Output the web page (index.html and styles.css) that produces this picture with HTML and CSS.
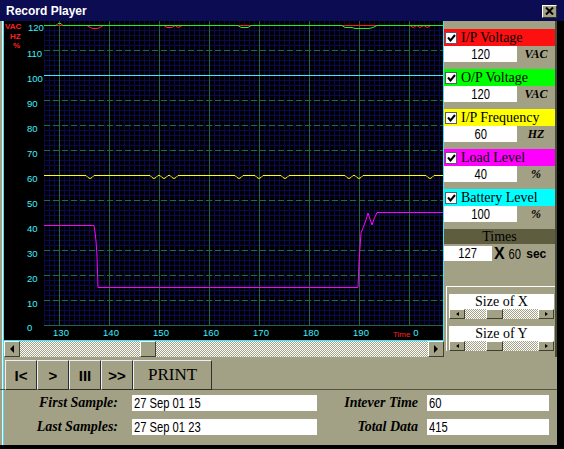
FILE: index.html
```html
<!DOCTYPE html>
<html lang="en">
  <head>
    <meta charset="UTF-8" />
    <title>Record Player</title>
    <link rel="stylesheet" href="styles.css">
  </head>
  <body>
    <div class="window">
      <div class="titlebar">
        <span class="title">Record Player</span>
        <button class="close">
          <svg width="9" height="8" viewBox="0 0 9 8"><path d="M1 0.5L8 7.5M8 0.5L1 7.5" stroke="#000" stroke-width="2"/></svg>
        </button>
      </div>

      <div class="frame">
        <div class="main">
          <div class="graph">
            <div class="chart">
              <svg width="439" height="319" viewBox="4 21 439 319">
                <defs>
                  <pattern id="fine" x="44" y="0" width="5" height="5" patternUnits="userSpaceOnUse">
                    <path d="M0 0.5H5M0.5 0V5" stroke="#09094e" stroke-width="1"/>
                  </pattern>
                </defs>
                <rect x="4" y="21" width="439" height="319" fill="#000"/>
                <rect x="44" y="21" width="399" height="304" fill="url(#fine)" shape-rendering="crispEdges"/>

                <g stroke="#1f6650" shape-rendering="crispEdges">
                  <path d="M59.5 21V325M109.5 21V325M159.5 21V325M209.5 21V325M259.5 21V325M309.5 21V325M359.5 21V325M409.5 21V325"/>
                  <path d="M44 325.5H443"/>
                </g>
                <g stroke="#18703f" stroke-dasharray="6 3" shape-rendering="crispEdges">
                  <path d="M44 50.5H443M44 100.5H443M44 125.5H443M44 150.5H443M44 200.5H443M44 250.5H443M44 275.5H443M44 300.5H443"/>
                </g>

                <g fill="#ff2020" font-family="Liberation Sans, Arial, sans-serif" font-size="8" font-weight="bold">
                  <text x="5" y="29">VAC</text>
                  <text x="10" y="39">HZ</text>
                  <text x="13" y="48">%</text>
                </g>

                <g fill="#3cf0ff" font-family="Liberation Sans, Arial, sans-serif" font-size="9.5">
                  <text x="28" y="31">120</text>
                  <text x="27" y="56.5">110</text>
                  <text x="27" y="81.5">100</text>
                  <text x="27" y="106.5">90</text>
                  <text x="27" y="131.5">80</text>
                  <text x="27" y="156.5">70</text>
                  <text x="27" y="181.5">60</text>
                  <text x="27" y="206.5">50</text>
                  <text x="27" y="231.5">40</text>
                  <text x="27" y="256.5">30</text>
                  <text x="27" y="281.5">20</text>
                  <text x="27" y="306.5">10</text>
                  <text x="27" y="331">0</text>
                </g>
                <g fill="#3cf0ff" font-family="Liberation Sans, Arial, sans-serif" font-size="9.5" text-anchor="middle">
                  <text x="61" y="336">130</text>
                  <text x="111" y="336">140</text>
                  <text x="161" y="336">150</text>
                  <text x="211" y="336">160</text>
                  <text x="261" y="336">170</text>
                  <text x="311" y="336">180</text>
                  <text x="361" y="336">190</text>
                  <text x="416" y="336">0</text>
                </g>
                <text x="393" y="337" fill="#ff2020" font-family="Liberation Sans, Arial, sans-serif" font-size="8">Time</text>

                <g fill="none" stroke-width="1">
                  <path stroke="#40e8ff" d="M44 75.5H443"/>
                  <path stroke="#ff2020" d="M44 25.5H87L90 27.5L93 28.5H97L100 27.5L103 25.5H164L167 27.5H172L175 25.5L178 27.5L182 25.5H410L413 27.5L417 25.5L420 27.5L424 25.5L427 27.5L431 25.5H443"/>
                  <path stroke="#22ee22" d="M44 25.5H56L58 23.5H61L63 25.5H238L241 27.5H248L251 25.5H342L345 27.5H352L355 28.5H369L373 27.5L377 25.5H443"/>
                  <path stroke="#ffff00" d="M44 175.5H86l2 2l2 1l2 -1l2 -2H150l2 2l2 1l2 -1l2 -2H160l2 2l2 1l2 -1l2 -2H170l2 2l2 1l2 -1l2 -2H235l2 2l2 1l2 -1l2 -2H255l2 2l2 1l2 -1l2 -2H281l2 2l2 1l2 -1l2 -2H345l2 2l2 1l2 -1l2 -2H355l2 2l2 1l2 -1l2 -2H426l2 2l2 1l2 -1l2 -2H443"/>
                  <path stroke="#ff00ff" d="M44 225.5H94L95 232L96 241L97 256L98 287.5H358L359 262L361 233L363 228L366 220L368 213L370 219L372 225L374 219L377 212.5H443"/>
                </g>
              </svg>
            </div>
            <div class="hscroll">
              <span class="arrow"><i class="tri-left"></i></span>
              <div class="track"><span class="thumb main-thumb"></span></div>
              <span class="arrow"><i class="tri-right"></i></span>
            </div>
          </div>

          <div class="side">
            <div class="series">
              <div class="series-head red"><span class="check"><svg width="9" height="8" viewBox="0 0 9 8"><path d="M1 3.5L3.5 6.5L8 1" stroke="#000" stroke-width="2" fill="none"/></svg></span>I/P Voltage</div>
              <div class="series-val"><span class="val-box"><span class="narrow">120</span></span><span class="unit">VAC</span></div>
            </div>
            <div class="series">
              <div class="series-head green"><span class="check"><svg width="9" height="8" viewBox="0 0 9 8"><path d="M1 3.5L3.5 6.5L8 1" stroke="#000" stroke-width="2" fill="none"/></svg></span>O/P Voltage</div>
              <div class="series-val"><span class="val-box"><span class="narrow">120</span></span><span class="unit">VAC</span></div>
            </div>
            <div class="series">
              <div class="series-head yellow"><span class="check"><svg width="9" height="8" viewBox="0 0 9 8"><path d="M1 3.5L3.5 6.5L8 1" stroke="#000" stroke-width="2" fill="none"/></svg></span>I/P Frequency</div>
              <div class="series-val"><span class="val-box"><span class="narrow">60</span></span><span class="unit">HZ</span></div>
            </div>
            <div class="series">
              <div class="series-head magenta"><span class="check"><svg width="9" height="8" viewBox="0 0 9 8"><path d="M1 3.5L3.5 6.5L8 1" stroke="#000" stroke-width="2" fill="none"/></svg></span>Load Level</div>
              <div class="series-val"><span class="val-box"><span class="narrow">40</span></span><span class="unit">%</span></div>
            </div>
            <div class="series">
              <div class="series-head cyan"><span class="check"><svg width="9" height="8" viewBox="0 0 9 8"><path d="M1 3.5L3.5 6.5L8 1" stroke="#000" stroke-width="2" fill="none"/></svg></span>Battery Level</div>
              <div class="series-val"><span class="val-box"><span class="narrow">100</span></span><span class="unit">%</span></div>
            </div>

            <div class="times">
              <div class="times-head">Times</div>
              <div class="times-val">
                <span class="times-box"><span class="narrow">127</span></span>
                <span class="times-x">X</span>
                <span class="times-num narrow">60</span>
                <span class="times-sec">sec</span>
              </div>
            </div>

            <div class="sizes">
              <div class="size-label">Size of X</div>
              <div class="mini-scroll">
                <span class="arrow small"><i class="tri-left"></i></span>
                <div class="track"><span class="thumb mini-thumb"></span></div>
                <span class="arrow small"><i class="tri-right"></i></span>
              </div>
              <div class="size-label">Size of Y</div>
              <div class="mini-scroll">
                <span class="arrow small"><i class="tri-left"></i></span>
                <div class="track"><span class="thumb mini-thumb"></span></div>
                <span class="arrow small"><i class="tri-right"></i></span>
              </div>
            </div>
          </div>
        </div>

        <div class="bottom">
          <div class="toolbar">
            <button class="tool">I&lt;</button>
            <button class="tool">&gt;</button>
            <button class="tool">III</button>
            <button class="tool">&gt;&gt;</button>
            <button class="tool print">PRINT</button>
          </div>
          <div class="info">
            <span class="label">First Sample:</span>
            <span class="field"><span class="narrow left">27 Sep 01 15</span></span>
            <span class="label">Intever Time</span>
            <span class="field"><span class="narrow left">60</span></span>
            <span class="label">Last Samples:</span>
            <span class="field"><span class="narrow left">27 Sep 01 23</span></span>
            <span class="label">Total Data</span>
            <span class="field"><span class="narrow left">415</span></span>
          </div>
        </div>
      </div>
    </div>
  </body>
</html>
```

FILE: styles.css
```css
body {
  margin: 0;
  background: #a3a185;
  font-family: "Liberation Sans", Arial, sans-serif;
}
.window {
  width: 564px;
  height: 449px;
  display: flex;
  flex-direction: column;
  background: #a3a185;
  overflow: hidden;
}
.titlebar {
  height: 21px;
  flex: none;
  background: #0c0c52;
  display: flex;
  align-items: center;
  justify-content: space-between;
  padding: 0 7px 0 6px;
}
.title {
  color: #fff;
  font-weight: bold;
  font-size: 12px;
}
.close {
  width: 15px;
  height: 13px;
  padding: 0;
  margin-top: 1px;
  background: #a3a185;
  border: 1px solid;
  border-color: #fff #303024 #303024 #fff;
  display: flex;
  align-items: center;
  justify-content: center;
}
.frame {
  flex: 1;
  display: flex;
  flex-direction: column;
  border-right: 7px solid #000;
  border-bottom: 4px solid #000;
  background: linear-gradient(to right, #a3a185 0 2px, #fff 2px 3px, #2ee8ff 3px 4px, #a3a185 4px);
}
.main {
  display: flex;
  height: 336px;
}
.graph {
  width: 444px;
  padding-left: 4px;
  box-sizing: border-box;
}
.chart {
  height: 320px;
  border-right: 1px solid #2ee8ff;
  border-bottom: 1px solid #2ee8ff;
  box-sizing: border-box;
  background: #000;
}
.chart svg {
  display: block;
}
.hscroll {
  height: 16px;
  display: flex;
}
.track {
  flex: 1;
  position: relative;
  background: repeating-conic-gradient(#fff 0 25%, #a3a185 0 50%) 0 0 / 2px 2px;
}
.arrow {
  width: 16px;
  flex: none;
  box-sizing: border-box;
  background: #a3a185;
  border: 1px solid;
  border-color: #fff #404030 #404030 #fff;
  display: flex;
  align-items: center;
  justify-content: center;
}
.tri-left {
  border-right: 4px solid #000;
  border-top: 4px solid transparent;
  border-bottom: 4px solid transparent;
}
.tri-right {
  border-left: 4px solid #000;
  border-top: 4px solid transparent;
  border-bottom: 4px solid transparent;
}
.thumb {
  position: absolute;
  top: 0;
  height: 100%;
  box-sizing: border-box;
  background: #a3a185;
  border: 1px solid;
  border-color: #fff #404030 #404030 #fff;
}
.main-thumb {
  left: 120px;
  width: 16px;
}
.narrow {
  display: inline-block;
  transform: scaleX(0.8);
}
.narrow.left {
  transform-origin: left center;
}

.side {
  width: 113px;
  padding: 8px 0 0 0;
  box-sizing: border-box;
  border-right: 2px solid #4a4a38;
}
.series {
  margin-bottom: 7px;
}
.series-head {
  height: 17px;
  display: flex;
  align-items: center;
  font-family: "Liberation Serif", "Times New Roman", serif;
  font-size: 14px;
}
.red { background: #ff1010; }
.green { background: #00ff00; }
.yellow { background: #ffff00; }
.magenta { background: #ff00ff; }
.cyan { background: #00ffff; }
.check {
  width: 12px;
  height: 12px;
  flex: none;
  box-sizing: border-box;
  margin: 0 4px 0 1px;
  background: #fff;
  border: 1px solid #5a5a70;
  display: flex;
  align-items: center;
  justify-content: center;
}
.series-val {
  height: 16px;
  display: flex;
}
.val-box {
  width: 73px;
  background: #fff;
  text-align: center;
  font-size: 14px;
  line-height: 16px;
}
.unit {
  flex: 1;
  text-align: center;
  font-family: "Liberation Serif", serif;
  font-style: italic;
  font-weight: bold;
  font-size: 12px;
  line-height: 16px;
}
.times-head {
  height: 15px;
  background: #5f5d40;
  text-align: center;
  font-family: "Liberation Serif", serif;
  font-size: 14px;
  line-height: 15px;
}
.times-val {
  margin-top: 2px;
  height: 15px;
  display: flex;
  align-items: center;
}
.times-box {
  width: 48px;
  height: 15px;
  background: #fff;
  text-align: center;
  font-size: 14px;
  line-height: 15px;
}
.times-x {
  margin-left: 2px;
  font-weight: bold;
  font-size: 16px;
}
.times-num {
  margin-left: 2px;
  font-size: 14px;
}
.times-sec {
  margin-left: 4px;
  font-weight: bold;
  font-size: 12px;
}
.sizes {
  margin: 25px 0 0 2px;
  padding: 7px 1px 0 2px;
  border-top: 1px solid #fff;
  border-left: 1px solid #fff;
}
.size-label {
  height: 15px;
  background: #fff;
  text-align: center;
  font-family: "Liberation Serif", serif;
  font-size: 14px;
  line-height: 16px;
}
.mini-scroll {
  height: 10px;
  display: flex;
  margin-bottom: 7px;
}
.arrow.small {
  width: 16px;
}
.small .tri-left,
.small .tri-right {
  border-top-width: 2px;
  border-bottom-width: 2px;
  border-left-width: 3px;
  border-right-width: 3px;
}
.small .tri-left { border-left: 0; }
.small .tri-right { border-right: 0; }
.mini-thumb {
  left: 21px;
  width: 17px;
}

.bottom {
  flex: 1;
  display: flex;
  flex-direction: column;
}
.toolbar {
  height: 33px;
  padding: 3px 0 0 5px;
  box-sizing: border-box;
  display: flex;
  border-bottom: 1px solid #55543f;
}
.tool {
  width: 32px;
  height: 30px;
  padding: 0;
  background: #a3a185;
  border: 1px solid;
  border-color: #ececff #303024 #303024 #ececff;
  font-family: "Liberation Sans", Arial, sans-serif;
  font-size: 15px;
  font-weight: bold;
  color: #000;
}
.tool.print {
  width: 79px;
  font-family: "Liberation Serif", serif;
  font-weight: normal;
  font-size: 17px;
}
.info {
  display: grid;
  grid-template-columns: 132px 185px 110px 122px;
  row-gap: 8px;
  padding-top: 5px;
}
.label {
  text-align: right;
  padding-right: 14px;
  font-family: "Liberation Serif", serif;
  font-style: italic;
  font-weight: bold;
  font-size: 14px;
  line-height: 16px;
}
.label:nth-child(3),
.label:nth-child(7) {
  padding-right: 9px;
}
.field {
  height: 16px;
  background: #fff;
  padding-left: 2px;
  font-size: 14px;
  line-height: 16px;
  overflow: hidden;
}
```
